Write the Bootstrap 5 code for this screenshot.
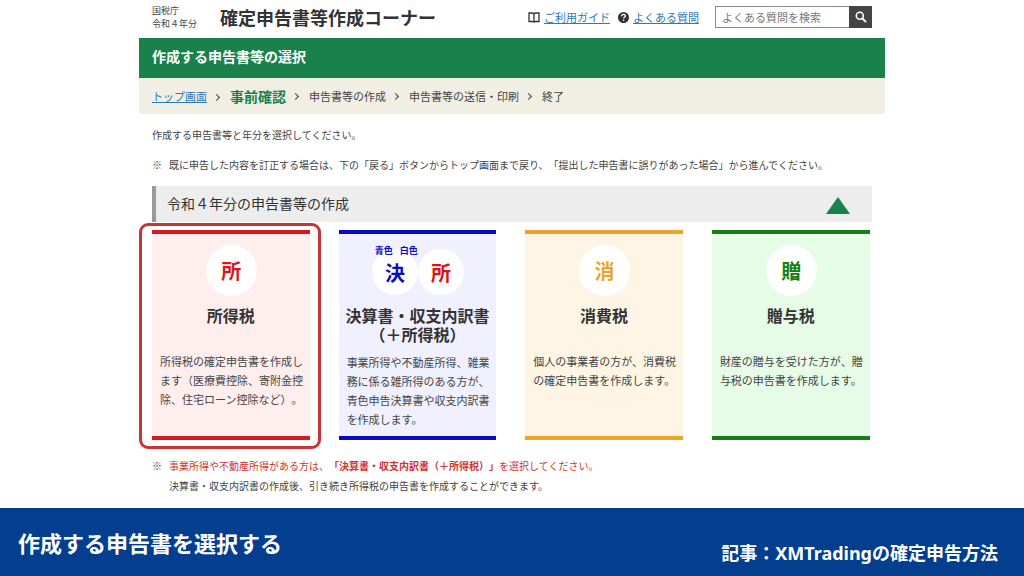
<!DOCTYPE html>
<html lang="ja">
<head>
<meta charset="utf-8">
<meta name="viewport" content="width=device-width, initial-scale=1">
<title>確定申告書等作成コーナー</title>
<link href="https://cdn.jsdelivr.net/npm/bootstrap@5.3.0/dist/css/bootstrap.min.css" rel="stylesheet">
<style>
  body { font-family: "Noto Sans CJK JP", sans-serif; font-size: 11px; line-height: 19px; color: #444; text-spacing-trim: space-all; }
  a { color: #2a7ab8; }
  .site { max-width: 746px; }
  .inner { padding-left: 13px; padding-right: 13px; }
  .top { min-height: 38px; }
  .agency { font-size: 9px; line-height: 13px; }
  .site-title { font-size: 18px; line-height: 24px; color: #333; padding-left: 23px; }
  .help a { line-height: 14px; }
  .search { width: 157px; }
  .search .form-control { height: 22px; min-height: 22px; font-size: 11px; line-height: 16px; padding: 2px 6px; border-color: #888; }
  .search .form-control::placeholder { color: #777; }
  .search .btn { width: 23px; height: 22px; background: #444; }
  .page-title { background: #1a814b; font-size: 14px; line-height: 20px; padding-top: 8px; padding-bottom: 12px; }
  .steps { background: #f1efe4; min-height: 36px; }
  .steps li + li::before { content: ""; display: inline-block; width: 5px; height: 5px; margin: 0 11px 2px 7px; border: solid #444; border-width: 1px 1px 0 0; transform: rotate(45deg); }
  .steps .now { font-size: 14px; color: #1a814b; }
  .notes { font-size: 10px; line-height: 20px; }
  .notes-top { padding: 11px 0; gap: 10px; }
  .note-sign { width: 17px; }
  .year { background: #ededed; border-left: 4px solid #999; font-size: 14px; line-height: 20px; color: #333; min-height: 36px; padding: 0 22px 2px 11px; }
  .cards { --bs-gutter-x: 29px; --bs-gutter-y: 16px; margin-right: -12px; }
  .tax { --tone: #d7191c; background: #ffeeee; border-top: 4px solid var(--tone); border-bottom: 4px solid var(--tone); min-height: 210px; padding: 0 7px 7px 8px; }
  .tax h3 { font-size: 16px; line-height: 19px; color: #333; min-height: 37px; margin: 10px -7px 9px -8px; }
  .tax p { margin-right: -1px; }
  .blue { --tone: #0a0ac4; background: #f0f0ff; }
  .amber { --tone: #e9a52a; background: #fff5e4; }
  .green { --tone: #148014; background: #e7fce7; }
  .icons { min-height: 62px; padding-top: 11px; }
  .disc { width: 51px; height: 51px; font-size: 20px; color: var(--tone); }
  .pair { width: 46px; height: 46px; margin-top: 4px; }
  .red-tone { --tone: #e00f0f; }
  .tags { top: 11px; left: 28px; gap: 7px; font-size: 9px; line-height: 12px; color: #0a0ac4; }
  .chosen::after { content: ""; position: absolute; inset: -11px -11px -13px -13px; border: 3px solid #cb3335; border-radius: 9px; pointer-events: none; }
  .warn { color: #d0342f; }
  .caption-bar { background: #043f8f; min-height: 68px; padding: 0 26px 0 18px; }
  .caption-main { font-size: 22px; line-height: 30px; }
  .caption-sub { font-family: "Noto Sans", "Noto Sans CJK JP", sans-serif; font-size: 18px; line-height: 24px; padding-top: 22px; }
</style>
</head>
<body class="min-vh-100 d-flex flex-column bg-white">
<div class="site w-100 mx-auto">
  <header class="top inner d-flex flex-wrap align-items-center">
    <div class="agency pb-1">国税庁<br>令和４年分</div>
    <h1 class="site-title fw-bold mb-1">確定申告書等作成コーナー</h1>
    <nav class="help d-flex ms-auto gap-2 me-3 pb-1" aria-label="ヘルプ">
      <span class="d-flex align-items-center gap-1">
        <svg width="12" height="11" viewBox="0 0 12 11" fill="none" stroke="#333" stroke-width="1.3"><path d="M6 10.5V1.8C5.5 1.2 4.9 1 4 1H1v8.5h3.2c1 0 1.8.2 1.8 1M6 1.8C6.5 1.2 7.1 1 8 1h3v8.5H7.8c-1 0-1.8.2-1.8 1"/></svg>
        <a href="#guide">ご利用ガイド</a></span>
      <span class="d-flex align-items-center gap-1">
        <svg width="11" height="11" viewBox="0 0 11 11"><circle cx="5.5" cy="5.5" r="5.5" fill="#333"/><path d="M3.7 4.2c0-2.5 3.7-2.3 3.7-.2 0 1.3-1.8 1.3-1.8 2.6" fill="none" stroke="#fff" stroke-width="1.3"/><circle cx="5.6" cy="8.3" r=".8" fill="#fff"/></svg>
        <a href="#faq">よくある質問</a></span>
    </nav>
    <form class="search input-group flex-nowrap mb-1">
      <input class="form-control rounded-0" type="search" placeholder="よくある質問を検索" aria-label="よくある質問を検索">
      <button class="btn rounded-0 border-0 p-0 d-flex align-items-center justify-content-center" type="button" aria-label="検索">
        <svg width="12" height="12" viewBox="0 0 12 12" fill="none" stroke="#fff"><circle cx="4.8" cy="4.8" r="3.5" stroke-width="1.6"/><path d="M7.5 7.5l3.6 3.6" stroke-width="2"/></svg>
      </button>
    </form>
  </header>

  <h2 class="page-title inner text-white fw-bold mb-0">作成する申告書等の選択</h2>
  <nav aria-label="手順">
    <ol class="steps inner list-unstyled d-flex flex-wrap align-items-center mb-0">
      <li><a href="#top">トップ画面</a></li>
      <li class="now fw-bold" aria-current="step">事前確認</li>
      <li>申告書等の作成</li>
      <li>申告書等の送信・印刷</li>
      <li>終了</li>
    </ol>
  </nav>

  <main class="inner">
    <div class="notes notes-top d-flex flex-column">
      <p class="mb-0">作成する申告書等と年分を選択してください。</p>
      <p class="d-flex mb-0"><span class="note-sign flex-shrink-0">※</span><span>既に申告した内容を訂正する場合は、下の「戻る」ボタンからトップ画面まで戻り、「提出した申告書に誤りがあった場合」から進んでください。</span></p>
    </div>

    <h2 class="year fw-normal d-flex align-items-center justify-content-between mb-2">令和４年分の申告書等の作成
      <svg class="mt-1" width="24" height="17" viewBox="0 0 24 17"><path d="M12 0l12 17H0z" fill="#1a814b"/></svg>
    </h2>

    <div class="row row-cols-2 row-cols-md-4 cards">
      <div class="col">
        <section class="tax chosen position-relative">
          <div class="icons d-flex justify-content-center"><span class="disc rounded-circle bg-white fw-bold d-flex align-items-center justify-content-center">所</span></div>
          <h3 class="fw-bold text-center">所得税</h3>
          <p class="mb-0">所得税の確定申告書を作成します（医療費控除、寄附金控除、住宅ローン控除など）。</p>
        </section>
      </div>
      <div class="col">
        <section class="tax blue">
          <div class="icons d-flex justify-content-center position-relative">
            <span class="disc pair rounded-circle bg-white fw-bold d-flex align-items-center justify-content-center">決</span>
            <span class="disc pair red-tone rounded-circle bg-white fw-bold d-flex align-items-center justify-content-center">所</span>
            <span class="tags position-absolute fw-bold d-flex"><span>青色</span><span>白色</span></span>
          </div>
          <h3 class="fw-bold text-center">決算書・収支内訳書<br>（＋所得税）</h3>
          <p class="mb-0">事業所得や不動産所得、雑業務に係る雑所得のある方が、青色申告決算書や収支内訳書を作成します。</p>
        </section>
      </div>
      <div class="col">
        <section class="tax amber">
          <div class="icons d-flex justify-content-center"><span class="disc rounded-circle bg-white fw-bold d-flex align-items-center justify-content-center">消</span></div>
          <h3 class="fw-bold text-center">消費税</h3>
          <p class="mb-0">個人の事業者の方が、消費税の確定申告書を作成します。</p>
        </section>
      </div>
      <div class="col">
        <section class="tax green">
          <div class="icons d-flex justify-content-center"><span class="disc rounded-circle bg-white fw-bold d-flex align-items-center justify-content-center">贈</span></div>
          <h3 class="fw-bold text-center">贈与税</h3>
          <p class="mb-0">財産の贈与を受けた方が、贈与税の申告書を作成します。</p>
        </section>
      </div>
    </div>

    <div class="notes d-flex mt-3 pb-2">
      <span class="note-sign flex-shrink-0">※</span>
      <div><span class="warn">事業所得や不動産所得がある方は、<strong>「決算書・収支内訳書（＋所得税）」</strong>を選択してください。</span><br>決算書・収支内訳書の作成後、引き続き所得税の申告書を作成することができます。</div>
    </div>
  </main>
</div>

<footer class="caption-bar mt-auto d-flex flex-wrap align-items-center justify-content-between text-white fw-bold">
  <span class="caption-main">作成する申告書を選択する</span>
  <span class="caption-sub">記事：XMTradingの確定申告方法</span>
</footer>
<script src="https://cdn.jsdelivr.net/npm/bootstrap@5.3.0/dist/js/bootstrap.bundle.min.js"></script>
</body>
</html>
